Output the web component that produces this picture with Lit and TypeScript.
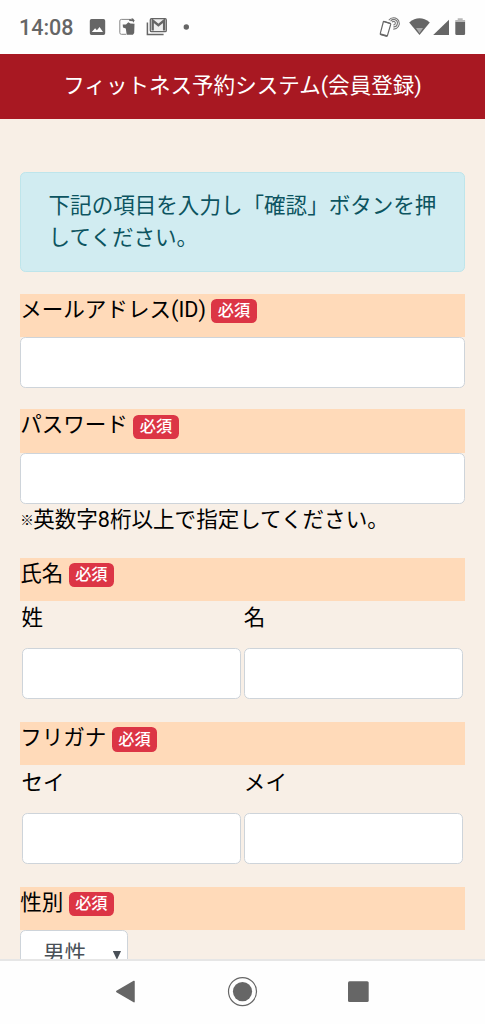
import { LitElement, html, css, nothing } from "lit";
import { customElement, property } from "lit/decorators.js";

@customElement("status-bar")
class StatusBar extends LitElement {
  static styles = css`
    :host { display: flex; height: 54px; box-sizing: border-box; align-items: center; background: #fefefe; color: #666; padding: 0 18px 0 19px; justify-content: space-between; font: 500 21.5px/54px Roboto, sans-serif; }
    .group { display: flex; align-items: center; height: 54px; }
    .time { width: 70px; padding-top: 2px; }
    svg { display: block; }
  `;
  render() {
    return html`
      <div class="group">
        <span class="time">14:08</span>
        <svg width="111" height="54" viewBox="89 0 111 54" fill="#666">
          <path fill-rule="evenodd" d="M91.5 19h12q1.7 0 1.7 1.7v12.6q0 1.7-1.7 1.7h-12q-1.7 0-1.7-1.7V20.7q0-1.7 1.7-1.7zM91.8 32h11.2l-3.4-5-2.700 3.300-1.800-2z"/>
          <path d="M126 34.300h-4.600q-1.600 0-1.600-1.600V21q0-1.600 1.600-1.600h9.500" fill="none" stroke="#888" stroke-width="1"/>
          <path d="M129 19.200h3l-.8-1 1.800.3 1.700 2-1.600 2.200-.3-1.400-3.400-.2z"/>
          <path d="M122.700 24.600l3.300-.2 2.300-2.200 2.200 1.300 4 .2-.3 9.400-1.300 1.700h-6.200l-.9-6.200-2.800-1.200z"/>
          <path d="M147.400 22.500v12.100h16.200" fill="none" stroke="#666" stroke-width="1.500"/>
          <rect x="150.300" y="18.700" width="16" height="13" rx="1.200" fill="#eee" stroke="#666" stroke-width="1.300"/>
          <path d="M152.700 30.500v-10l5.700 4.700 5.700-4.700v10" fill="none" stroke="#666" stroke-width="2.300"/>
          <circle cx="186.300" cy="27" r="2.700"/>
        </svg>
      </div>
      <svg width="90" height="54" viewBox="377 0 90 54" fill="#666">
        <g fill="none" stroke="#777" stroke-width="1.100"><path d="M388.800 20.300a5.700 5.700 0 1 1 4.500 8.800"/><path d="M390.600 21.200a3.700 3.700 0 1 1 2.800 5.700"/><path d="M392.200 22.200a1.700 1.700 0 1 1 1.200 2.600"/></g>
        <path d="M384 21.400l6 1.800q.9.300.7 1.200l-3.200 11q-.3 1-1.200.8l-5.300-1.600q-1-.3-.7-1.200l3-11.400q.2-.8.700-.6z" fill="#fff" stroke="#666" stroke-width="1.200"/>
        <path d="M380.300 33.200l7.300 2.100-.5 1.500-7-2.100zM383.600 20.900l7.100 2.100-.4 1.200-7-2.100z"/>
        <path d="M409.200 22.500q10.300-8.300 20.600 0L419.500 35z"/>
        <path d="M416 28h7l-3.500 5.200z" fill="#aaa"/>
        <path d="M449 19.700V35h-15.800z"/>
        <path d="M455.300 21.700h9.800v12.100q0 1.200-1.200 1.200h-7.400q-1.200 0-1.200-1.200z"/>
        <path d="M455.300 22v-2h2.400v-1.800h5V20h2.400v2z" fill="#b8b8b8"/>
      </svg>`;
  }
}

@customElement("nav-bar")
class NavBar extends LitElement {
  static styles = css`
    :host { display: block; box-sizing: border-box; height: 65px; border-top: 2px solid #e6e6e6; background: #fefefe; }
    svg { display: block; }
  `;
  render() {
    return html`<svg width="485" height="63" viewBox="0 961 485 63" fill="#666">
      <path d="M116.800 991.500L134 981.500v20.200z" stroke="#666" stroke-width="1.500" stroke-linejoin="round"/>
      <circle cx="242.500" cy="991.600" r="14" fill="none" stroke="#666" stroke-width="1.200"/>
      <circle cx="242.500" cy="991.600" r="9.600"/>
      <rect x="348" y="981.300" width="20.700" height="20.700" rx="1.500"/>
    </svg>`;
  }
}

@customElement("form-field")
class FormField extends LitElement {
  static styles = css`
    :host { display: block; margin-bottom: 21.55px; }
    .label { height: 43.1px; background: #ffdab9; white-space: nowrap; display: flex; align-items: flex-start; }
    .name { height: 32.3px; line-height: 32.3px; }
    .badge { box-sizing: border-box; margin: 5.2px 0 0 5.4px; height: 24.4px; line-height: 24px; padding: 0.6px 6.5px 0; border-radius: 5.4px; background: #dc3545; color: #fff; font-size: 16.16px; font-weight: 500; }
    .input { display: block; width: 100%; height: 51.2px; box-sizing: border-box; border: 1.35px solid #ced4da; border-radius: 5.4px; background: #fff; padding: 0 16px; font: inherit; outline: none; }
    .note { display: flex; height: 32.3px; line-height: 32.3px; white-space: nowrap; }
    .mark { width: 13px; font-size: 13.5px; line-height: 33px; }
    .pair { display: grid; grid-template-columns: 1fr 1fr; gap: 2.7px; padding: 1.35px; }
    .sub { height: 46px; line-height: 32.3px; }
    .select { display: flex; box-sizing: border-box; width: 108px; height: 51.2px; border: 1.35px solid #ced4da; border-radius: 5.4px; background: #fff; color: #495057; padding: 7px 6px 0 22px; justify-content: space-between; line-height: 32.3px; }
    .arrow { margin-top: 13px; width: 8.5px; height: 9px; background: #495057; clip-path: polygon(0 0, 100% 0, 50% 100%); }
  `;
  @property() label = "";
  @property() note = "";
  @property() choice = "";
  @property({ type: Array }) parts: string[] = [];

  private control() {
    if (this.choice) return html`<div class="select"><span>${this.choice}</span><i class="arrow"></i></div>`;
    if (this.parts.length)
      return html`<div class="pair">${this.parts.map((p) => html`<div><div class="sub">${p}</div><input class="input" aria-label=${p} /></div>`)}</div>`;
    return html`<input class="input" aria-label=${this.label} />`;
  }
  render() {
    return html`
      <div class="label"><span class="name">${this.label}</span><span class="badge">必須</span></div>
      ${this.control()}
      ${this.note ? html`<div class="note"><span class="mark">※</span><span>${this.note}</span></div>` : nothing}`;
  }
}

@customElement("app-root")
class AppRoot extends LitElement {
  static styles = css`
    :host { display: flex; flex-direction: column; width: 485px; height: 1024px; overflow: hidden; background: #f8efe6; color: #000; font: 400 21.55px/32.3px Roboto, "Noto Sans CJK JP", sans-serif; }
    .title { flex: none; height: 64.5px; line-height: 64px; text-align: center; background: #a81822; color: #fff; white-space: nowrap; }
    .page { flex: 1; min-height: 0; overflow: hidden; padding: 53.9px 20.2px 0; }
    .alert { box-sizing: border-box; height: 99.7px; margin-bottom: 21.55px; padding: 16.2px 20px 16.2px 27.4px; border: 1.35px solid #bee5eb; border-radius: 5.4px; background: #d1ecf1; color: #0c5460; white-space: nowrap; }
    status-bar, nav-bar { flex: none; }
  `;
  render() {
    return html`
      <status-bar></status-bar>
      <header class="title">フィットネス予約システム(会員登録)</header>
      <main class="page">
        <div class="alert">下記の項目を入力し「確認」ボタンを押<br />してください。</div>
        <form-field label="メールアドレス(ID)"></form-field>
        <form-field label="パスワード" note="英数字8桁以上で指定してください。"></form-field>
        <form-field label="氏名" .parts=${["姓", "名"]}></form-field>
        <form-field label="フリガナ" .parts=${["セイ", "メイ"]}></form-field>
        <form-field label="性別" choice="男性"></form-field>
      </main>
      <nav-bar></nav-bar>`;
  }
}
